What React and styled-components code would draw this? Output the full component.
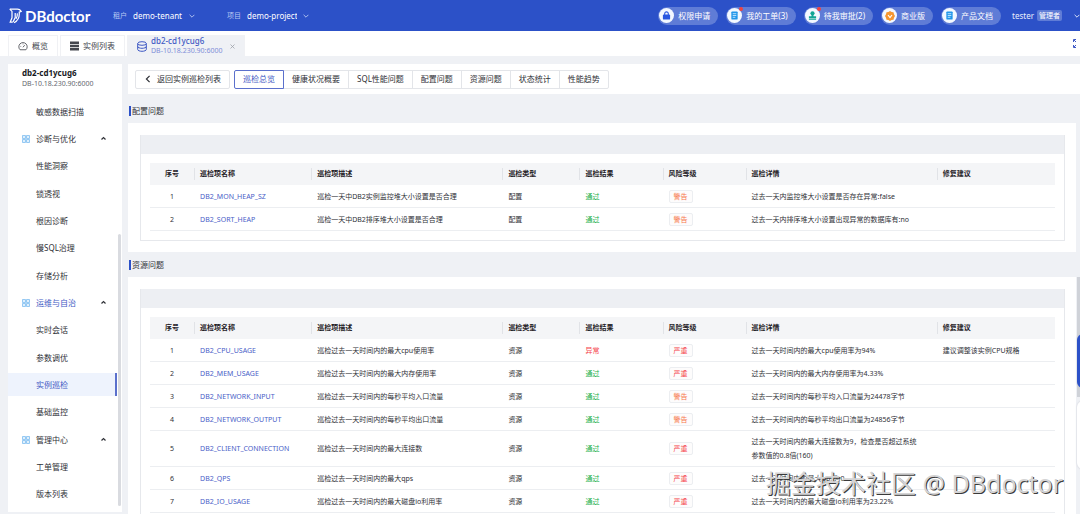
import styled, { createGlobalStyle } from "styled-components"

const GlobalStyle = createGlobalStyle`
    * {
        box-sizing: border-box;
    }
    body {
        margin: 0;
        color: #2f3137;
        background: #eff1f5;
        font-family: "Noto Sans", "Noto Sans CJK SC", sans-serif;
        font-size: 8px;
        line-height: 14px;
    }
    button, select {
        font: inherit;
        color: inherit;
        margin: 0;
        padding: 0;
        border: 0;
        background: none;
        cursor: pointer;
    }
    a {
        color: inherit;
        text-decoration: none;
    }
`;

const Page = styled.div`
    position: relative;
    display: flex;
    flex-direction: column;
    height: 100vh;
    overflow: hidden;
`;

/* top bar */

const TopBar = styled.header`
    display: flex;
    align-items: center;
    height: 31px;
    flex: none;
    padding-left: 9px;
    color: #e9eefc;
    background: #2c51c8;
`;
const Logo = styled.a`
    display: flex;
    align-items: center;
    gap: 3px;
    width: 104px;
    color: #fff;
    font-family: Lato, sans-serif;
    font-size: 15px;
    font-weight: 700;
`;
const Picker = styled.label`
    display: flex;
    align-items: center;
    gap: 6px;
    width: 114px;
    color: #b9c8f3;
    font-size: 7px;
`;
const PickerSelect = styled.select`
    appearance: none;
    color: #fff;
    font-size: 8px;
    width: 50px;
`;
const TopActions = styled.div`
    display: flex;
    align-items: center;
    gap: 8px;
    margin-left: auto;
`;
const Pill = styled.button`
    position: relative;
    display: flex;
    align-items: center;
    gap: 4px;
    height: 18px;
    padding: 0 8px 0 1px;
    border-radius: 9px;
    color: #fff;
    background: #5f7cd6;
    white-space: nowrap;
`;
const PillIcon = styled.span`
    display: flex;
    align-items: center;
    justify-content: center;
    width: 15px;
    height: 15px;
    border-radius: 50%;
    background: #f3f8ff;
`;
const Dot = styled.i`
    position: absolute;
    top: 0;
    left: 13px;
    width: 4px;
    height: 4px;
    border-radius: 50%;
    background: #f0433f;
`;
const User = styled.button`
    display: flex;
    align-items: center;
    gap: 3px;
    margin: 0 4px 0 3px;
`;
const Role = styled.span`
    padding: 0 2px;
    border-radius: 2px;
    font-size: 7px;
    line-height: 11px;
    color: #fff;
    background: #5f7cd6;
`;

/* page tabs */

const TabBar = styled.nav`
    display: flex;
    align-items: flex-end;
    gap: 2px;
    height: 25px;
    flex: none;
    padding-left: 8px;
    background: #fff;
`;
const PageTab = styled.button`
    display: flex;
    align-items: center;
    gap: 4px;
    height: 21px;
    padding: 0 9px;
    border: 1px solid #f0f1f4;
    border-bottom: 0;
    color: ${(props) => (props.$active ? "#3f59c4" : "#44474e")};
    background: ${(props) => (props.$active ? "#eff1f5" : "#fff")};
    text-align: left;
`;
const TabText = styled.span`
    display: flex;
    flex-direction: column;
    line-height: 10px;
    font-weight: 500;
    padding-right: 4px;
    small {
        font-size: 7px;
        font-weight: 400;
        color: #7f8fd8;
    }
`;
const CloseMark = styled.span`
    display: flex;
    color: #9a9da6;
`;
const Expand = styled.button`
    display: flex;
    align-self: center;
    margin-left: auto;
    width: 7px;
    overflow: hidden;
    color: #3f59c4;
`;

/* sidebar */

const Body = styled.div`
    display: flex;
    flex: 1;
    gap: 6px;
    min-height: 0;
    padding: 8px 0 0 8px;
`;
const Sidebar = styled.aside`
    position: relative;
    display: flex;
    flex-direction: column;
    width: 114px;
    flex: none;
    margin-bottom: 2px;
    padding: 3px 5px 6px 0;
    background: #fff;
`;
const Instance = styled.div`
    height: 33px;
    flex: none;
    padding-left: 14px;
    line-height: 11px;
    font-size: 7px;
    color: #666970;
    strong {
        display: block;
        font-size: 8px;
        color: #17191e;
    }
`;
const Menu = styled.nav`
    display: flex;
    flex-direction: column;
    flex: 1;
    justify-content: space-between;
`;
const MenuItem = styled.a`
    display: flex;
    align-items: center;
    height: 23px;
    padding: 0 9px 0 ${(props) => (props.$group ? "14px" : "28px")};
    color: ${(props) => (props.$active ? "#3f59c4" : "#2f3137")};
    background: ${(props) => (props.$selected ? "#eef3fd" : "none")};
    border-right: 2px solid ${(props) => (props.$selected ? "#5b70cc" : "transparent")};
    span {
        flex: 1;
        padding-left: ${(props) => (props.$group ? "6px" : "0")};
    }
    svg:last-child {
        color: #2f3137;
    }
`;
const SideThumb = styled.i`
    position: absolute;
    right: 1px;
    top: 170px;
    bottom: 6px;
    width: 3px;
    border-radius: 2px;
    background: #d9dbe0;
`;

/* content */

const Main = styled.main`
    flex: 1;
    min-width: 0;
    overflow: hidden;
`;
const Toolbar = styled.div`
    display: flex;
    align-items: center;
    gap: 4px;
    height: 30px;
    margin-bottom: 4px;
    padding-left: 7px;
    background: #fff;
`;
const BackButton = styled.button`
    display: flex;
    align-items: center;
    gap: 5px;
    height: 19px;
    padding: 0 8px;
    border: 1px solid #e3e5e9;
    border-radius: 2px;
`;
const Segments = styled.div`
    display: flex;
`;
const Segment = styled.button`
    height: 19px;
    padding: 0 8px;
    border: 1px solid #e3e5e9;
    & + & {
        margin-left: -1px;
    }
    &:first-child {
        position: relative;
        color: #3f59c4;
        border-color: #5b70cc;
        border-radius: 2px 0 0 2px;
    }
    &:last-child {
        border-radius: 0 2px 2px 0;
    }
`;
const SectionTitle = styled.h2`
    margin: 0;
    padding: 8px 0 7px 1px;
    font-size: 8px;
    font-weight: 400;
    line-height: 10px;
    span {
        display: block;
        padding-left: 1px;
        border-left: 2px solid #2c51c8;
    }
`;
const Card = styled.section`
    margin-right: 4px;
    padding: 12px 11px 11px 12px;
    background: #fff;
`;
const Frame = styled.div`
    border: 1px solid #e6e8ec;
    border-top: 0;
    padding: 0 9px 9px;
    &::before {
        content: "";
        display: block;
        height: 19px;
        margin: 0 -9px 9px;
        background: #edeff3;
    }
`;
const Table = styled.table`
    width: 100%;
    table-layout: fixed;
    border-collapse: separate;
    border-spacing: 0;
    font-size: 7px;
`;
const Th = styled.th`
    height: 22px;
    padding: 0;
    text-align: left;
    color: #1f2126;
    background: #f4f5f7;
    span {
        display: block;
        padding-left: 5px;
        line-height: 12px;
        border-left: 1px solid #e1e3e7;
    }
    &:first-child span {
        border: 0;
        padding: 0;
        text-align: center;
    }
`;
const Td = styled.td`
    height: 23px;
    padding: 4px 14px 3px 6px;
    border-bottom: 1px solid #eceef1;
    &:first-child {
        padding: 4px 0 3px;
        text-align: center;
    }
`;
const ItemLink = styled.a`
    color: #4a60c8;
`;
const Result = styled.span`
    color: ${(props) => (props.$ok ? "#23b04b" : "#f5424a")};
`;
const Tag = styled.span`
    display: inline-block;
    padding: 0 4px;
    border: 1px solid #eceef1;
    border-radius: 2px;
    line-height: 11px;
    color: ${(props) => (props.$severe ? "#f5424a" : "#f7774a")};
    background: #fdfcfc;
`;

/* things floating over the page */

const PageThumb = styled.i`
    position: absolute;
    right: 0;
    top: 277px;
    height: 120px;
    width: 3px;
    background: #cfd2d8;
`;
const SideHandle = styled.button`
    position: absolute;
    right: -9px;
    top: ${(props) => props.$top};
    width: 12px;
    height: ${(props) => props.$height};
    border-radius: 6px;
    background: ${(props) => props.$color};
    box-shadow: 0 0 2px #c9ccd3;
`;
const Watermark = styled.div`
    position: absolute;
    right: 17px;
    bottom: 13px;
    font-size: 25px;
    line-height: 36px;
    color: #d4d4d5;
    text-shadow: 1px 1px 0 #3a3a3a;
    white-space: nowrap;
    pointer-events: none;
`;

const Chevron = ({ size = 6, d = "M1 3l4 4 4-4", weight = 1.5 }) => (
    <svg width={size} height={size} viewBox="0 0 10 10" fill="none" stroke="currentColor" strokeWidth={weight}>
        <path d={d} />
    </svg>
);

const LogoMark = () => (
    <svg width="13" height="16" viewBox="0 0 13 16" fill="none" stroke="#fff" strokeWidth="1.2">
        <path d="M.8 1.200h7.700c1.800 0 2.800.8 3.700 2.200l-2 .8c.5 4.300-1.200 8.400-5.200 10.600" />
        <path d="M.8 1.200L3 3.400v6.400l-1.800 4.400h2.600" />
        <path d="M6.200 5v4.600L4 14M8.300 5.400c.2 2-.2 3.800-1.200 5.400" />
    </svg>
);

const icons = {
    lock: (
        <svg width="9" height="9" viewBox="0 0 10 10" fill="#2857e0">
            <rect x="1" y="4" width="8" height="5.500" rx="1" />
            <path d="M3 4.500V3a2 2 0 0 1 4 0v1.500" fill="none" stroke="#2857e0" strokeWidth="1.200" />
        </svg>
    ),
    doc: (
        <svg width="9" height="9" viewBox="0 0 10 10">
            <rect x="1.500" y="0.500" width="7" height="9" rx="1" fill="#2196ea" />
            <path d="M3 3h4M3 5h4M3 7h3" stroke="#d8f0ff" strokeWidth="0.900" />
        </svg>
    ),
    stamp: (
        <svg width="9" height="9" viewBox="0 0 10 10" fill="#12a594">
            <circle cx="5" cy="2.600" r="2.300" />
            <path d="M3.900 4h2.200v1.800H9V8H1V5.800h2.900zM1 8.600h8v1H1z" />
        </svg>
    ),
    gem: (
        <svg width="10" height="10" viewBox="0 0 10 10">
            <path d="M5 0l1.600 1 1.900.3.500 1.900L10 5 9 6.800l-.5 1.900-1.900.3L5 10l-1.600-1-1.900-.3L1 6.800 0 5l1-1.800.5-1.900L3.400 1z" fill="#f5962f" />
            <path d="M3 4l2 2.500L7 4" fill="none" stroke="#fff" strokeWidth="1.200" />
        </svg>
    ),
};

const GaugeIcon = () => (
    <svg width="10" height="10" viewBox="0 0 12 12" fill="none" stroke="currentColor">
        <path d="M2.500 10.500a5 5 0 1 1 7 0zM6 7.500l2-2.500M3 6.500h.8M6 3.200v.8" />
    </svg>
);

const ListIcon = () => (
    <svg width="9" height="10" viewBox="0 0 9 10" fill="currentColor">
        <path d="M0 0.500h9v2.500H0zM0 3.800h9v2.500H0zM0 7.100h9v2.500H0z" />
    </svg>
);

const DatabaseIcon = () => (
    <svg width="10" height="11" viewBox="0 0 10 11" fill="none" stroke="currentColor">
        <ellipse cx="5" cy="2.500" rx="4.300" ry="1.800" />
        <path d="M.7 2.500v6c0 1 2 1.800 4.300 1.800s4.300-.8 4.300-1.800v-6M.7 5.500c0 1 2 1.800 4.300 1.800s4.300-.8 4.300-1.800" />
    </svg>
);

const GroupIcon = () => (
    <svg width="8" height="8" viewBox="0 0 8 8" fill="#dff0fd" stroke="#7dbdf0" strokeWidth="0.800">
        <path d="M.5.5h3v3h-3zM4.500.5h3v3h-3zM.5 4.500h3v3h-3zM4.500 4.500h3v3h-3z" />
    </svg>
);

const FullscreenMark = styled.svg`
    flex: none;
`;

const ExpandIcon = () => (
    <FullscreenMark width="10" height="9" viewBox="0 0 10 9" fill="none" stroke="currentColor">
        <path d="M.5 3V.5H3M7 .5h2.500V3M.5 6v2.500H3M7 8.500h2.500V6M1 1l2 2M9 1L7 3M1 8l2-2M9 8L7 6" />
    </FullscreenMark>
);

const actions = [
    { icon: "lock", text: "权限申请" },
    { icon: "doc", text: "我的工单(3)", dot: true },
    { icon: "stamp", text: "待我审批(2)", dot: true },
    { icon: "gem", text: "商业版" },
    { icon: "doc", text: "产品文档" },
];

const menu = [
    { text: "敏感数据扫描" },
    { text: "诊断与优化", group: true },
    { text: "性能洞察" },
    { text: "锁透视" },
    { text: "根因诊断" },
    { text: "慢SQL治理" },
    { text: "存储分析" },
    { text: "运维与自治", group: true, active: true },
    { text: "实时会话" },
    { text: "参数调优" },
    { text: "实例巡检", active: true, selected: true },
    { text: "基础监控" },
    { text: "管理中心", group: true },
    { text: "工单管理" },
    { text: "版本列表" },
];

const segments = ["巡检总览", "健康状况概要", "SQL性能问题", "配置问题", "资源问题", "状态统计", "性能趋势"];

const columns = [
    ["序号", 44],
    ["巡检项名称", 117],
    ["巡检项描述", 191],
    ["巡检类型", 77],
    ["巡检结果", 83],
    ["风险等级", 83],
    ["巡检详情", 191],
    ["修复建议", 118],
];

const configRows = [
    ["DB2_MON_HEAP_SZ", "巡检一天中DB2实例监控堆大小设置是否合理", "配置", "通过", "警告", "过去一天内监控堆大小设置是否存在异常:false"],
    ["DB2_SORT_HEAP", "巡检一天中DB2排序堆大小设置是否合理", "配置", "通过", "警告", "过去一天内排序堆大小设置出现异常的数据库有:no"],
];

const resourceRows = [
    ["DB2_CPU_USAGE", "巡检过去一天时间内的最大cpu使用率", "资源", "异常", "严重", "过去一天时间内的最大cpu使用率为94%", "建议调整该实例CPU规格"],
    ["DB2_MEM_USAGE", "巡检过去一天时间内的最大内存使用率", "资源", "通过", "严重", "过去一天时间内的最大内存使用率为4.33%"],
    ["DB2_NETWORK_INPUT", "巡检过去一天时间内的每秒平均入口流量", "资源", "通过", "警告", "过去一天时间内的每秒平均入口流量为24478字节"],
    ["DB2_NETWORK_OUTPUT", "巡检过去一天时间内的每秒平均出口流量", "资源", "通过", "警告", "过去一天时间内的每秒平均出口流量为24856字节"],
    ["DB2_CLIENT_CONNECTION", "巡检过去一天时间内的最大连接数", "资源", "通过", "严重", "过去一天时间内的最大连接数为9，检查是否超过系统参数值的0.8倍(160)"],
    ["DB2_QPS", "巡检过去一天时间内的最大qps", "资源", "通过", "严重", "过去一天时间内的最大qps为0"],
    ["DB2_IO_USAGE", "巡检过去一天时间内的最大磁盘io利用率", "资源", "通过", "严重", "过去一天时间内的最大磁盘io利用率为23.22%"],
];

const CheckSection = ({ title, rows }) => (
    <>
        <SectionTitle><span>{title}</span></SectionTitle>
        <Card>
            <Frame>
                <Table>
                    <colgroup>
                        {columns.map(([name, width]) => <col key={name} width={width} />)}
                    </colgroup>
                    <thead>
                        <tr>
                            {columns.map(([name]) => <Th key={name}><span>{name}</span></Th>)}
                        </tr>
                    </thead>
                    <tbody>
                        {rows.map(([name, desc, type, result, level, detail, advice], i) => (
                            <tr key={name}>
                                <Td>{i + 1}</Td>
                                <Td><ItemLink href="#">{name}</ItemLink></Td>
                                <Td>{desc}</Td>
                                <Td>{type}</Td>
                                <Td><Result $ok={result === "通过"}>{result}</Result></Td>
                                <Td><Tag $severe={level === "严重"}>{level}</Tag></Td>
                                <Td>{detail}</Td>
                                <Td>{advice}</Td>
                            </tr>
                        ))}
                    </tbody>
                </Table>
            </Frame>
        </Card>
    </>
);

const App = () => {
    return (
        <>
            <GlobalStyle />
            <Page>
                <TopBar>
                    <Logo href="#"><LogoMark />DBdoctor</Logo>
                    <Picker>
                        租户
                        <PickerSelect><option>demo-tenant</option></PickerSelect>
                        <Chevron />
                    </Picker>
                    <Picker>
                        项目
                        <PickerSelect><option>demo-project</option></PickerSelect>
                        <Chevron />
                    </Picker>
                    <TopActions>
                        {actions.map((item) => (
                            <Pill key={item.text}>
                                <PillIcon>{icons[item.icon]}</PillIcon>
                                {item.text}
                                {item.dot && <Dot />}
                            </Pill>
                        ))}
                        <User>tester <Role>管理者</Role></User>
                        <Chevron />
                    </TopActions>
                </TopBar>
                <TabBar>
                    <PageTab><GaugeIcon />概览</PageTab>
                    <PageTab><ListIcon />实例列表</PageTab>
                    <PageTab $active>
                        <DatabaseIcon />
                        <TabText>db2-cd1ycug6<small>DB-10.18.230.90:6000</small></TabText>
                        <CloseMark><Chevron size={5} d="M1 1l8 8M9 1l-8 8" /></CloseMark>
                    </PageTab>
                    <Expand aria-label="全屏"><ExpandIcon /></Expand>
                </TabBar>
                <Body>
                    <Sidebar>
                        <Instance><strong>db2-cd1ycug6</strong>DB-10.18.230.90:6000</Instance>
                        <Menu>
                            {menu.map((item) => (
                                <MenuItem
                                    key={item.text}
                                    href="#"
                                    $group={item.group}
                                    $active={item.active}
                                    $selected={item.selected}
                                >
                                    {item.group && <GroupIcon />}
                                    <span>{item.text}</span>
                                    {item.group && <Chevron size={5} weight={2.4} d="M1 7l4-4 4 4" />}
                                </MenuItem>
                            ))}
                        </Menu>
                        <SideThumb />
                    </Sidebar>
                    <Main>
                        <Toolbar>
                            <BackButton><Chevron size={8} d="M7 1L3 5l4 4" />返回实例巡检列表</BackButton>
                            <Segments>
                                {segments.map((text) => <Segment key={text}>{text}</Segment>)}
                            </Segments>
                        </Toolbar>
                        <CheckSection title="配置问题" rows={configRows} />
                        <CheckSection title="资源问题" rows={resourceRows} />
                    </Main>
                </Body>
                <PageThumb />
                <SideHandle aria-label="助手" $top="334px" $height="54px" $color="#2c51c8" />
                <SideHandle aria-label="工具" $top="401px" $height="68px" $color="#fff" />
                <Watermark>掘金技术社区 @ DBdoctor</Watermark>
            </Page>
        </>
    );
};

export default App;
